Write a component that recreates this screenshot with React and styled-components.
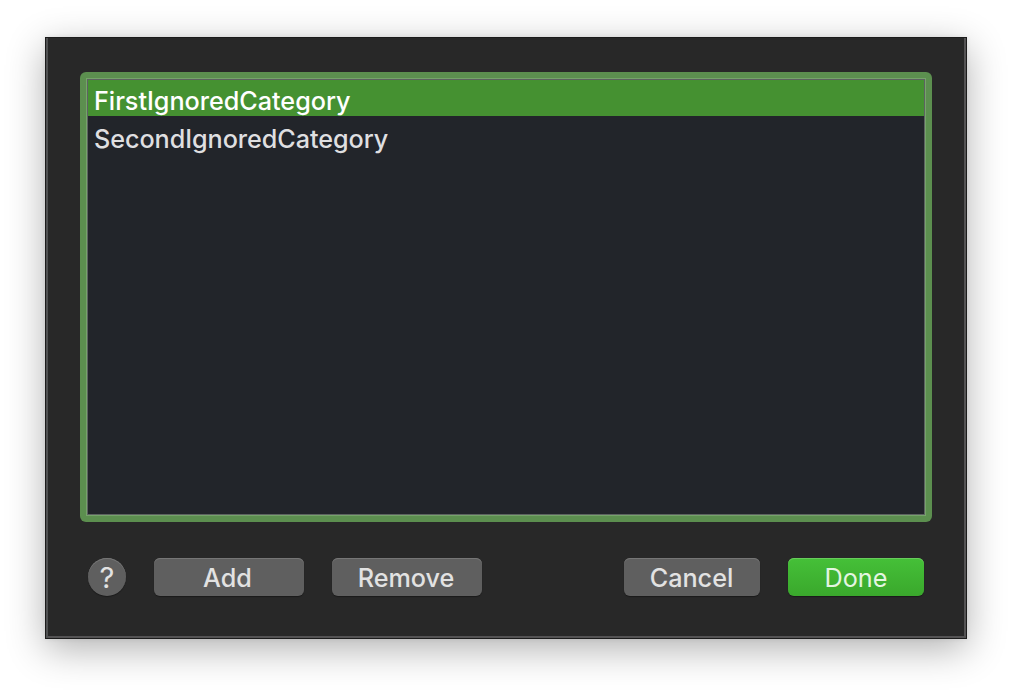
import React from "react";
import styled, { createGlobalStyle, css } from "styled-components";

const GlobalStyle = createGlobalStyle`
  * { box-sizing: border-box; }
  body {
    margin: 0;
    background: #fff;
    font-family: Inter, "Liberation Sans", sans-serif;
    overflow: hidden;
  }
`;

const Desktop = styled.main`
  width: 1012px;
  height: 692px;
  padding: 37px 45px 53px;
  background: #fff;
`;

const Sheet = styled.section`
  width: 922px;
  height: 602px;
  padding: 34px 32px 0;
  display: flex;
  flex-direction: column;
  gap: 36px;
  background: #282828;
  border: 1px solid #1c1c1c;
  box-shadow:
    inset 2px 0 #505152,
    inset -2px -2px #545354,
    0 10px 36px rgba(0, 0, 0, 0.31),
    0 0 5px rgba(0, 0, 0, 0.08);
`;

const FocusRing = styled.div`
  width: 852px;
  height: 450px;
  margin-left: 2px;
  padding: 6px;
  border-radius: 6px;
  background: #5c8f4f;
`;

const List = styled.ul`
  height: 438px;
  margin: 0;
  padding: 1px;
  list-style: none;
  background: #22252a;
  border: 1px solid #76a36b;
  box-shadow: inset 0 0 0 1px #5d6360;
`;

const Row = styled.li`
  height: ${(p) => (p.$selected ? 36 : 38)}px;
  padding-left: 6px;
  font-size: 25.2px;
  line-height: ${(p) => (p.$selected ? 43 : 47)}px;
  letter-spacing: ${(p) => p.$tracking}px;
  font-weight: 500;
  color: ${(p) => (p.$selected ? "#fff" : "#dfdfe0")};
  background: ${(p) => (p.$selected ? "#459131" : "transparent")};
`;

const Actions = styled.div`
  display: flex;
  align-items: center;
  padding-left: 10px;
  gap: 28px;
`;

const control = css`
  height: 38px;
  padding: 0;
  border: 0;
  font: 500 25.2px/40px Inter, "Liberation Sans", sans-serif;
  color: #e2e2e2;
  background: #5f5f5f;
  box-shadow: inset 0 1px #767676, 0 1px 1px rgba(0, 0, 0, 0.35);
`;

const HelpButton = styled.button`
  ${control}
  width: 38px;
  border-radius: 50%;
  font-size: 29px;
  font-weight: 400;
`;

const PushButton = styled.button`
  ${control}
  width: ${(p) => p.$width}px;
  border-radius: 6px;
  padding-right: ${(p) => p.$nudge || 0}px;
  ${(p) =>
    p.$primary &&
    css`
      color: #e4f5e1;
      font-weight: 400;
      background: linear-gradient(#45c038, #3aa82c);
      box-shadow: inset 0 1px #68cc5c, 0 1px 1px rgba(0, 0, 0, 0.35);
    `}
`;

const Spacer = styled.div`
  width: 86px;
`;

export default function App() {
  return (
    <Desktop>
      <GlobalStyle />
      <Sheet>
        <FocusRing>
          <List>
            <Row $selected $tracking={-0.02}>FirstIgnoredCategory</Row>
            <Row $tracking={-0.05}>SecondIgnoredCategory</Row>
          </List>
        </FocusRing>
        <Actions>
          <HelpButton>?</HelpButton>
          <PushButton $width={150} $nudge={3}>Add</PushButton>
          <PushButton $width={150} $nudge={2}>Remove</PushButton>
          <Spacer />
          <PushButton $width={136} $nudge={1}>Cancel</PushButton>
          <PushButton $width={136} $primary>Done</PushButton>
        </Actions>
      </Sheet>
    </Desktop>
  );
}
